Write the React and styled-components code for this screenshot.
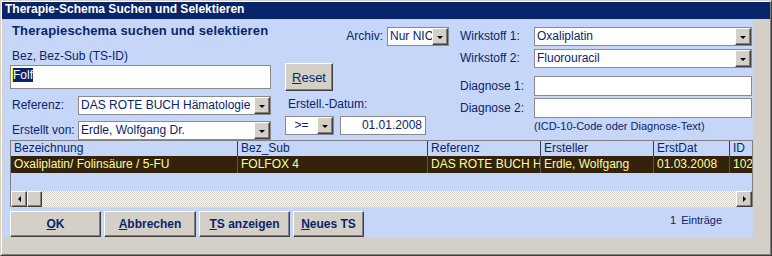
import React from 'react'
import styled, { createGlobalStyle } from 'styled-components'

const NAVY = '#0a246a'
const FACE = '#d4d0c8'
const FORM_BLUE = '#c6d6f8'

const GlobalStyle = createGlobalStyle`
    html, body {
        margin: 0;
        padding: 0;
        background: ${FACE};
    }
    body {
        font-family: "Liberation Sans", Arial, sans-serif;
        font-size: 12px;
        color: ${NAVY};
    }
    * { box-sizing: border-box; }
`

//! Window chrome.

const Window = styled.div`
    width: 772px;
    height: 256px;
    background: ${FACE};
    border: 1px solid;
    border-color: ${FACE} #404040 #404040 ${FACE};
`

const Frame = styled.div`
    height: 100%;
    display: flex;
    flex-direction: column;
    border: 1px solid;
    border-color: #fff #808080 #808080 #fff;
`

const TitleBar = styled.div`
    height: 17px;
    padding-left: 3px;
    background: ${NAVY};
    color: #fff;
    font-weight: bold;
    font-size: 12px;
    line-height: 15px;
    white-space: nowrap;
`

const Body = styled.div`
    flex: 1;
    padding: 1px 0 0 1px;
`

const Panel = styled.div`
    width: 750px;
    height: 217px;
    background: ${FORM_BLUE};
    display: flex;
    flex-direction: column;
`

//! Top form area.

const TopArea = styled.div`
    height: 120px;
    padding-left: 7px;
    display: flex;
`

const Column = styled.div`
    width: ${p => p.$w}px;
    margin-left: ${p => p.$ml || 0}px;
    display: flex;
    flex-direction: column;
`

const Heading = styled.div`
    margin-top: 3px;
    padding-left: 2px;
    font-size: 13px;
    font-weight: bold;
    line-height: 15px;
    letter-spacing: 0.15px;
    white-space: nowrap;
`

const Caption = styled.div`
    margin-top: ${p => p.$mt || 0}px;
    padding-left: ${p => p.$pl || 0}px;
    font-size: ${p => p.$size || 12}px;
    line-height: ${p => p.$lh || 15}px;
    white-space: nowrap;
`

const Row = styled.div`
    display: flex;
    align-items: center;
    height: ${p => p.$h || 19}px;
    margin-top: ${p => p.$mt || 0}px;
    justify-content: ${p => p.$justify || 'flex-start'};
    gap: ${p => p.$gap || 0}px;
`

const RowLabel = styled.span`
    width: ${p => (p.$w ? `${p.$w}px` : 'auto')};
    flex-shrink: 0;
    padding-left: ${p => p.$pl || 0}px;
    white-space: nowrap;
    line-height: 15px;
`

const TextBox = styled.div`
    width: ${p => (p.$w ? `${p.$w}px` : 'auto')};
    flex: ${p => (p.$w ? 'none' : 1)};
    height: ${p => p.$h || 19}px;
    margin-top: ${p => p.$mt || 0}px;
    background: #fff;
    border: 1px solid #8a8a8a;
    padding: 0 ${p => (p.$align === 'right' ? 3 : 1)}px 0 1px;
    text-align: ${p => p.$align || 'left'};
    line-height: ${p => (p.$h || 19) - 2}px;
    white-space: nowrap;
    overflow: hidden;
`

const Selected = styled.span`
    display: inline-block;
    background: ${NAVY};
    color: #fff;
    line-height: 14px;
    border-left: 1px solid #f4f000;
    vertical-align: middle;
`

const ComboBox = styled.div`
    width: ${p => (p.$w ? `${p.$w}px` : 'auto')};
    flex: ${p => (p.$w ? 'none' : 1)};
    height: 19px;
    background: #fff;
    border: 1px solid #8a8a8a;
    display: flex;
`

const ComboText = styled.span`
    flex: 1;
    min-width: 0;
    padding-left: ${p => (p.$center ? 0 : 2)}px;
    text-align: ${p => (p.$center ? 'center' : 'left')};
    line-height: 17px;
    white-space: nowrap;
    overflow: hidden;
`

const DropButton = styled.span`
    width: 16px;
    height: 17px;
    flex-shrink: 0;
    background: ${FACE};
    border: 1px solid;
    border-color: #fff #404040 #404040 #fff;
    box-shadow: inset -1px -1px #808080;
    display: flex;
    align-items: center;
    justify-content: center;

    &::after {
        content: '';
        margin: 1px 1px 0 0;
        border-left: 3px solid transparent;
        border-right: 3px solid transparent;
        border-top: 3px solid #000;
    }
`

const Combo = ({ w, center, children }) => (
    <ComboBox $w={w}>
        <ComboText $center={center}>{children}</ComboText>
        <DropButton />
    </ComboBox>
)

const PlainButton = styled.button`
    width: ${p => p.$w}px;
    height: ${p => p.$h}px;
    margin-top: ${p => p.$mt || 0}px;
    padding: 0;
    background: ${FACE};
    color: ${NAVY};
    font-family: "Liberation Sans", Arial, sans-serif;
    font-size: ${p => p.$size || 12}px;
    font-weight: ${p => (p.$bold ? 'bold' : 'normal')};
    border: 1px solid;
    border-color: #fff #404040 #404040 #fff;
    box-shadow: inset -1px -1px #808080;
    flex-shrink: 0;

    u { text-decoration: underline; }
`

//* Grid.

const Grid = styled.div`
    width: 743px;
    height: 67px;
    margin-left: 7px;
    border: 1px solid #808080;
    border-bottom: none;
    display: flex;
    flex-direction: column;
    overflow: hidden;
`

const GridRow = styled.div`
    display: flex;
    height: ${p => p.$h}px;
    flex-shrink: 0;
    background: ${p => (p.$data ? '#33230c' : 'transparent')};
    color: ${p => (p.$data ? '#ffff99' : NAVY)};
`

const Cell = styled.div`
    width: ${p => p.$w}px;
    flex-shrink: 0;
    padding-left: 3px;
    line-height: ${p => p.$h}px;
    white-space: nowrap;
    overflow: hidden;
    border-right: 1px solid ${p => (p.$data ? '#5e5648' : '#3a3a50')};
`

const EmptyArea = styled.div`
    height: 18px;
    flex-shrink: 0;
`

const ScrollBar = styled.div`
    height: 16px;
    display: flex;
`

const ScrollButton = styled.span`
    width: ${p => p.$w || 16}px;
    height: 16px;
    flex-shrink: 0;
    background: ${FACE};
    border: 1px solid;
    border-color: #fff #404040 #404040 #fff;
    box-shadow: inset -1px -1px #808080;
    display: flex;
    align-items: center;
    justify-content: center;

    &::after {
        content: ${p => (p.$dir ? "''" : 'none')};
        border-top: 3px solid transparent;
        border-bottom: 3px solid transparent;
        ${p => (p.$dir === 'left' ? 'border-right: 3px solid #000;' : 'border-left: 3px solid #000;')}
    }
`

const Track = styled.span`
    flex: 1;
    background: repeating-conic-gradient(${FACE} 0 25%, #fff 0 50%) 0 0 / 2px 2px;
`

//* Bottom buttons.

const ButtonBar = styled.div`
    display: flex;
    height: 26px;
    margin-top: 4px;
    padding-left: 7px;
    gap: 3px;
`

const Count = styled.span`
    margin-left: 303px;
    padding-top: 2px;
    font-size: 11px;
    line-height: 14px;
    white-space: nowrap;

    b { font-weight: normal; margin-right: 5px; }
`

const columns = [
    { key: 'Bezeichnung', w: 227, value: 'Oxaliplatin/ Folinsäure / 5-FU' },
    { key: 'Bez_Sub', w: 190, value: 'FOLFOX 4' },
    { key: 'Referenz', w: 113, value: 'DAS ROTE BUCH Hämatologie' },
    { key: 'Ersteller', w: 113, value: 'Erdle, Wolfgang' },
    { key: 'ErstDat', w: 76, value: '01.03.2008' },
    { key: 'ID', w: 40, value: '1024' },
]

const commands = [
    { first: 'O', rest: 'K', w: 91 },
    { first: 'A', rest: 'bbrechen', w: 92 },
    { first: 'T', rest: 'S anzeigen', w: 91 },
    { first: 'N', rest: 'eues TS', w: 71 },
]

export default function App() {
    return (
        <>
            <GlobalStyle />
            <Window>
                <Frame>
                    <TitleBar>Therapie-Schema Suchen und Selektieren</TitleBar>
                    <Body>
                        <Panel>
                            <TopArea>
                                <Column $w={261}>
                                    <Heading>Therapieschema suchen und selektieren</Heading>
                                    <Caption $mt={11} $pl={2}>Bez, Bez-Sub (TS-ID)</Caption>
                                    <TextBox $mt={1}>
                                        <Selected>Folf</Selected>
                                    </TextBox>
                                    <Row $mt={7}>
                                        <RowLabel $w={68} $pl={2}>Referenz:</RowLabel>
                                        <Combo>DAS ROTE BUCH Hämatologie</Combo>
                                    </Row>
                                    <Row $mt={6}>
                                        <RowLabel $w={68} $pl={2}>Erstellt von:</RowLabel>
                                        <Combo>Erdle, Wolfgang Dr.</Combo>
                                    </Row>
                                </Column>

                                <Column $w={164} $ml={14}>
                                    <Row $mt={7} $justify="flex-end" $gap={4}>
                                        <RowLabel>Archiv:</RowLabel>
                                        <Combo w={62}>Nur NICHT archivierte</Combo>
                                    </Row>
                                    <PlainButton $w={48} $h={28} $mt={17} $size={13}>
                                        <u>R</u>eset
                                    </PlainButton>
                                    <Caption $mt={6} $pl={3}>Erstell.-Datum:</Caption>
                                    <Row $mt={4} $gap={6}>
                                        <Combo w={49} center>&gt;=</Combo>
                                        <TextBox $w={86} $align="right">01.01.2008</TextBox>
                                    </Row>
                                </Column>

                                <Column $w={292} $ml={11}>
                                    <Row $mt={7}>
                                        <RowLabel $w={74}>Wirkstoff 1:</RowLabel>
                                        <Combo>Oxaliplatin</Combo>
                                    </Row>
                                    <Row $mt={3}>
                                        <RowLabel $w={74}>Wirkstoff 2:</RowLabel>
                                        <Combo>Fluorouracil</Combo>
                                    </Row>
                                    <Row $mt={8} $h={20}>
                                        <RowLabel $w={74}>Diagnose 1:</RowLabel>
                                        <TextBox $h={20} />
                                    </Row>
                                    <Row $mt={2} $h={20}>
                                        <RowLabel $w={74}>Diagnose 2:</RowLabel>
                                        <TextBox $h={20} />
                                    </Row>
                                    <Caption $mt={1} $pl={74} $size={11} $lh={14}>
                                        (ICD-10-Code oder Diagnose-Text)
                                    </Caption>
                                </Column>
                            </TopArea>

                            <Grid>
                                <GridRow $h={15}>
                                    {columns.map(c => (
                                        <Cell key={c.key} $w={c.w} $h={15}>{c.key}</Cell>
                                    ))}
                                </GridRow>
                                <GridRow $h={17} $data>
                                    {columns.map(c => (
                                        <Cell key={c.key} $w={c.w} $h={17} $data>{c.value}</Cell>
                                    ))}
                                </GridRow>
                                <EmptyArea />
                                <ScrollBar>
                                    <ScrollButton $dir="left" />
                                    <ScrollButton $w={15} />
                                    <Track />
                                    <ScrollButton $dir="right" />
                                </ScrollBar>
                            </Grid>

                            <ButtonBar>
                                {commands.map(b => (
                                    <PlainButton key={b.first} $w={b.w} $h={26} $bold>
                                        <u>{b.first}</u>{b.rest}
                                    </PlainButton>
                                ))}
                                <Count><b>1</b>Einträge</Count>
                            </ButtonBar>
                        </Panel>
                    </Body>
                </Frame>
            </Window>
        </>
    )
}
